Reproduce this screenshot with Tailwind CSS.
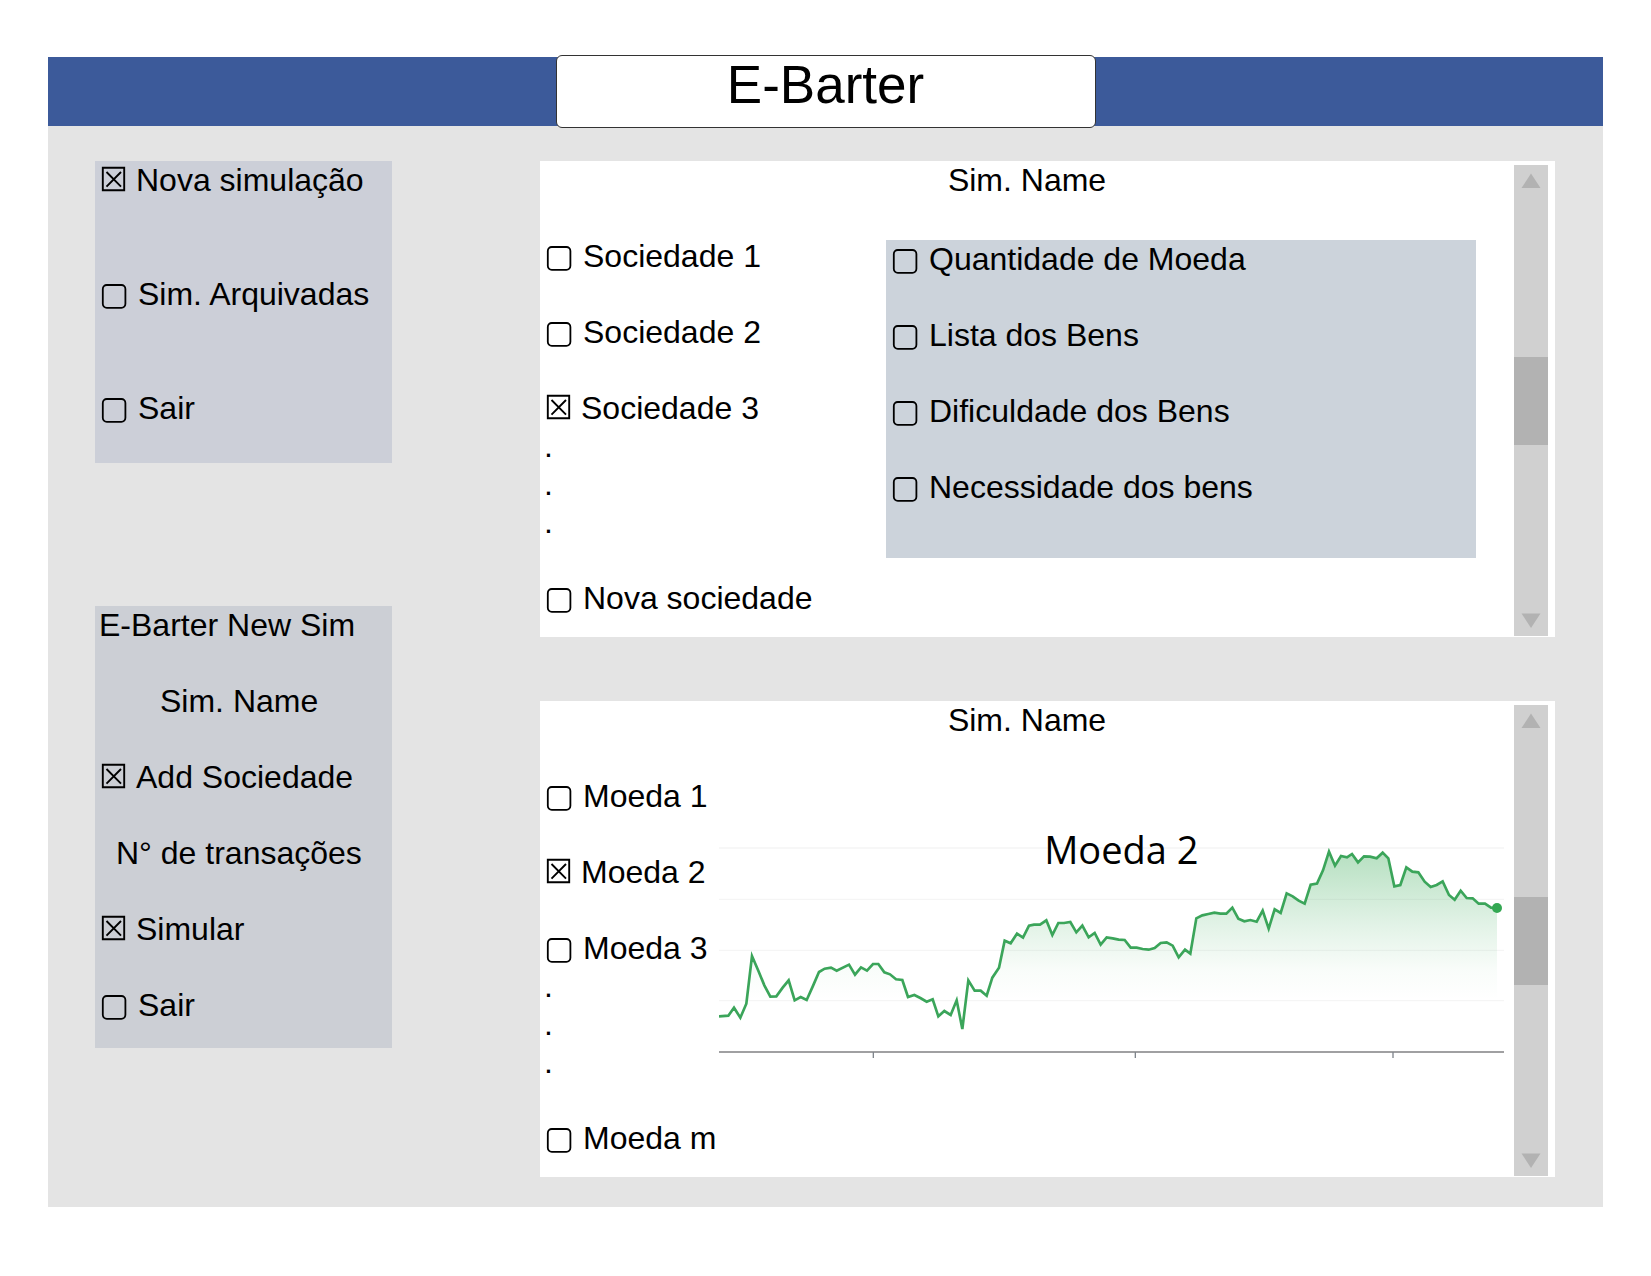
<!DOCTYPE html>
<html lang="pt">
<head>
<meta charset="utf-8">
<meta name="viewport" content="width=device-width, initial-scale=1">
<title>E-Barter</title>
<script src="https://cdn.jsdelivr.net/npm/@tailwindcss/browser@4"></script>
</head>
<body class="bg-white px-12 pt-[57px] pb-[69px] font-['Liberation_Sans',Arial,sans-serif] text-[32px] leading-[38px] text-black">

<svg class="hidden" aria-hidden="true">
  <symbol id="box" viewBox="0 0 30 38"><rect x="4.8" y="10" width="22.6" height="22.8" rx="4" fill="none" stroke="#000" stroke-width="1.8"/></symbol>
  <symbol id="box-x" viewBox="0 0 30 38"><path d="M4.8 6.8H26.2V29.2H4.8ZM8.5 11 23 25.6M23 11 8.5 25.6" fill="none" stroke="#000" stroke-width="1.9"/></symbol>
</svg>

<div class="bg-[#e4e4e4]">
  <header class="flex h-[69px] items-center justify-center bg-[#3c5a9a]">
    <h1 class="h-[73px] w-[540px] shrink-0 rounded-md border border-[#333] bg-white text-center text-[53px] leading-[57px]">E-Barter</h1>
  </header>

  <main class="flex gap-[148px] pt-[35px] pr-12 pb-[30px] pl-[47px]">
    <div class="flex w-[297px] shrink-0 flex-col gap-[143px]">
      <nav class="flex flex-col gap-[76px] bg-[#cccfd8] pb-9 pl-[3px]">
        <label class="flex"><span class="relative h-[38px] w-10 has-checked:w-[38px]"><input type="checkbox" checked class="peer absolute inset-0 size-full appearance-none"><svg class="pointer-events-none absolute h-[38px] w-[30px] peer-checked:hidden"><use href="#box"/></svg><svg class="pointer-events-none absolute hidden h-[38px] w-[30px] peer-checked:block"><use href="#box-x"/></svg></span>Nova simulação</label>
        <label class="flex"><span class="relative h-[38px] w-10 has-checked:w-[38px]"><input type="checkbox" class="peer absolute inset-0 size-full appearance-none"><svg class="pointer-events-none absolute h-[38px] w-[30px] peer-checked:hidden"><use href="#box"/></svg><svg class="pointer-events-none absolute hidden h-[38px] w-[30px] peer-checked:block"><use href="#box-x"/></svg></span>Sim. Arquivadas</label>
        <label class="flex"><span class="relative h-[38px] w-10 has-checked:w-[38px]"><input type="checkbox" class="peer absolute inset-0 size-full appearance-none"><svg class="pointer-events-none absolute h-[38px] w-[30px] peer-checked:hidden"><use href="#box"/></svg><svg class="pointer-events-none absolute hidden h-[38px] w-[30px] peer-checked:block"><use href="#box-x"/></svg></span>Sair</label>
      </nav>

      <section class="flex min-h-[442px] flex-col justify-between bg-[#cccfd5] pb-6 pl-[3px]">
        <h2 class="pl-px">E-Barter New Sim</h2>
        <p class="pl-[62px]">Sim. Name</p>
        <label class="flex"><span class="relative h-[38px] w-10 has-checked:w-[38px]"><input type="checkbox" checked class="peer absolute inset-0 size-full appearance-none"><svg class="pointer-events-none absolute h-[38px] w-[30px] peer-checked:hidden"><use href="#box"/></svg><svg class="pointer-events-none absolute hidden h-[38px] w-[30px] peer-checked:block"><use href="#box-x"/></svg></span>Add Sociedade</label>
        <p class="pl-[18px]">N° de transações</p>
        <label class="flex"><span class="relative h-[38px] w-10 has-checked:w-[38px]"><input type="checkbox" checked class="peer absolute inset-0 size-full appearance-none"><svg class="pointer-events-none absolute h-[38px] w-[30px] peer-checked:hidden"><use href="#box"/></svg><svg class="pointer-events-none absolute hidden h-[38px] w-[30px] peer-checked:block"><use href="#box-x"/></svg></span>Simular</label>
        <label class="flex"><span class="relative h-[38px] w-10 has-checked:w-[38px]"><input type="checkbox" class="peer absolute inset-0 size-full appearance-none"><svg class="pointer-events-none absolute h-[38px] w-[30px] peer-checked:hidden"><use href="#box"/></svg><svg class="pointer-events-none absolute hidden h-[38px] w-[30px] peer-checked:block"><use href="#box-x"/></svg></span>Sair</label>
      </section>
    </div>

    <div class="flex min-w-0 flex-1 flex-col gap-16">
      <section class="flex min-h-[476px] bg-white">
        <div class="flex min-w-0 flex-1 flex-col gap-[38px]">
          <h2 class="text-center">Sim. Name</h2>
          <div class="flex items-start">
            <div class="flex w-[346px] shrink-0 flex-col gap-[38px] pl-[3px]">
              <label class="flex"><span class="relative h-[38px] w-10 has-checked:w-[38px]"><input type="checkbox" class="peer absolute inset-0 size-full appearance-none"><svg class="pointer-events-none absolute h-[38px] w-[30px] peer-checked:hidden"><use href="#box"/></svg><svg class="pointer-events-none absolute hidden h-[38px] w-[30px] peer-checked:block"><use href="#box-x"/></svg></span>Sociedade 1</label>
              <label class="flex"><span class="relative h-[38px] w-10 has-checked:w-[38px]"><input type="checkbox" class="peer absolute inset-0 size-full appearance-none"><svg class="pointer-events-none absolute h-[38px] w-[30px] peer-checked:hidden"><use href="#box"/></svg><svg class="pointer-events-none absolute hidden h-[38px] w-[30px] peer-checked:block"><use href="#box-x"/></svg></span>Sociedade 2</label>
              <div>
                <label class="flex"><span class="relative h-[38px] w-10 has-checked:w-[38px]"><input type="checkbox" checked class="peer absolute inset-0 size-full appearance-none"><svg class="pointer-events-none absolute h-[38px] w-[30px] peer-checked:hidden"><use href="#box"/></svg><svg class="pointer-events-none absolute hidden h-[38px] w-[30px] peer-checked:block"><use href="#box-x"/></svg></span>Sociedade 3</label>
                <p class="pl-px">.<br>.<br>.</p>
              </div>
              <label class="flex"><span class="relative h-[38px] w-10 has-checked:w-[38px]"><input type="checkbox" class="peer absolute inset-0 size-full appearance-none"><svg class="pointer-events-none absolute h-[38px] w-[30px] peer-checked:hidden"><use href="#box"/></svg><svg class="pointer-events-none absolute hidden h-[38px] w-[30px] peer-checked:block"><use href="#box-x"/></svg></span>Nova sociedade</label>
            </div>
            <div class="mt-[3px] mr-[38px] flex flex-1 flex-col gap-[38px] bg-[#ccd3db] pb-[52px] pl-[3px]">
              <label class="flex"><span class="relative h-[38px] w-10 has-checked:w-[38px]"><input type="checkbox" class="peer absolute inset-0 size-full appearance-none"><svg class="pointer-events-none absolute h-[38px] w-[30px] peer-checked:hidden"><use href="#box"/></svg><svg class="pointer-events-none absolute hidden h-[38px] w-[30px] peer-checked:block"><use href="#box-x"/></svg></span>Quantidade de Moeda</label>
              <label class="flex"><span class="relative h-[38px] w-10 has-checked:w-[38px]"><input type="checkbox" class="peer absolute inset-0 size-full appearance-none"><svg class="pointer-events-none absolute h-[38px] w-[30px] peer-checked:hidden"><use href="#box"/></svg><svg class="pointer-events-none absolute hidden h-[38px] w-[30px] peer-checked:block"><use href="#box-x"/></svg></span>Lista dos Bens</label>
              <label class="flex"><span class="relative h-[38px] w-10 has-checked:w-[38px]"><input type="checkbox" class="peer absolute inset-0 size-full appearance-none"><svg class="pointer-events-none absolute h-[38px] w-[30px] peer-checked:hidden"><use href="#box"/></svg><svg class="pointer-events-none absolute hidden h-[38px] w-[30px] peer-checked:block"><use href="#box-x"/></svg></span>Dificuldade dos Bens</label>
              <label class="flex"><span class="relative h-[38px] w-10 has-checked:w-[38px]"><input type="checkbox" class="peer absolute inset-0 size-full appearance-none"><svg class="pointer-events-none absolute h-[38px] w-[30px] peer-checked:hidden"><use href="#box"/></svg><svg class="pointer-events-none absolute hidden h-[38px] w-[30px] peer-checked:block"><use href="#box-x"/></svg></span>Necessidade dos bens</label>
            </div>
          </div>
        </div>
        <div class="mt-1 mr-[7px] mb-px flex w-[34px] shrink-0 flex-col bg-[#d0d0d0]">
          <button type="button" aria-label="Subir" class="h-[30px]"><svg class="h-[30px] w-[34px]" viewBox="0 0 34 30"><path d="M17 8.5 26.5 23H7.5Z" fill="#b2b2b2"/></svg></button>
          <div class="flex-1 pt-[162px]"><div class="h-[88px] bg-[#b2b2b2]"></div></div>
          <button type="button" aria-label="Descer" class="h-[30px]"><svg class="h-[30px] w-[34px]" viewBox="0 0 34 30"><path d="M17 22 26.5 7.500H7.500Z" fill="#b2b2b2"/></svg></button>
        </div>
      </section>

      <section class="flex min-h-[476px] bg-white">
        <div class="flex min-w-0 flex-1 flex-col gap-[38px]">
          <h2 class="text-center">Sim. Name</h2>
          <div class="flex items-start">
            <div class="flex w-[179px] shrink-0 flex-col gap-[38px] pl-[3px]">
              <label class="flex"><span class="relative h-[38px] w-10 has-checked:w-[38px]"><input type="checkbox" class="peer absolute inset-0 size-full appearance-none"><svg class="pointer-events-none absolute h-[38px] w-[30px] peer-checked:hidden"><use href="#box"/></svg><svg class="pointer-events-none absolute hidden h-[38px] w-[30px] peer-checked:block"><use href="#box-x"/></svg></span>Moeda 1</label>
              <label class="flex"><span class="relative h-[38px] w-10 has-checked:w-[38px]"><input type="checkbox" checked class="peer absolute inset-0 size-full appearance-none"><svg class="pointer-events-none absolute h-[38px] w-[30px] peer-checked:hidden"><use href="#box"/></svg><svg class="pointer-events-none absolute hidden h-[38px] w-[30px] peer-checked:block"><use href="#box-x"/></svg></span>Moeda 2</label>
              <div>
                <label class="flex"><span class="relative h-[38px] w-10 has-checked:w-[38px]"><input type="checkbox" class="peer absolute inset-0 size-full appearance-none"><svg class="pointer-events-none absolute h-[38px] w-[30px] peer-checked:hidden"><use href="#box"/></svg><svg class="pointer-events-none absolute hidden h-[38px] w-[30px] peer-checked:block"><use href="#box-x"/></svg></span>Moeda 3</label>
                <p class="pl-px">.<br>.<br>.</p>
              </div>
              <label class="flex whitespace-nowrap"><span class="relative h-[38px] w-10 has-checked:w-[38px]"><input type="checkbox" class="peer absolute inset-0 size-full appearance-none"><svg class="pointer-events-none absolute h-[38px] w-[30px] peer-checked:hidden"><use href="#box"/></svg><svg class="pointer-events-none absolute hidden h-[38px] w-[30px] peer-checked:block"><use href="#box-x"/></svg></span>Moeda m</label>
            </div>
            <svg class="mt-[51px] mr-[10px] h-auto min-w-0 flex-1" viewBox="0 -36 2355 696" role="img" aria-label="Moeda 2">
              <defs>
                <linearGradient id="area" gradientUnits="userSpaceOnUse" x1="0" y1="35" x2="0" y2="480">
                  <stop offset="0" stop-color="#34a853" stop-opacity=".36"/>
                  <stop offset="0.5" stop-color="#34a853" stop-opacity=".14"/>
                  <stop offset="0.8" stop-color="#34a853" stop-opacity=".03"/>
                  <stop offset="1" stop-color="#34a853" stop-opacity="0"/>
                </linearGradient>
                <path id="line" d="M0 529 28 527 45 503 64 533 82 491 99 348 118 392 136 436 154 470 172 469 191 443 209 421 227 481 245 471 263 480 281 440 300 396 317 386 336 383 353 392 390 374 408 404 426 382 444 392 462 372 478 372 496 397 513 403 531 418 550 420 567 471 586 465 604 474 623 485 641 478 658 529 676 513 695 525 713 481 730 567 748 421 767 452 785 452 803 467 820 413 840 383 857 302 875 310 894 281 912 293 930 257 945 254 963 254 982 241 1000 285 1018 249 1035 249 1054 246 1072 277 1090 257 1109 292 1127 279 1145 314 1163 292 1181 295 1199 299 1217 300 1235 323 1253 323 1271 327 1289 329 1307 324 1325 309 1343 307 1361 317 1379 352 1398 329 1414 341 1432 235 1450 226 1468 222 1486 218 1504 221 1522 221 1540 203 1558 236 1576 244 1594 240 1613 245 1631 212 1649 266 1667 208 1685 219 1703 160 1721 169 1739 182 1757 191 1775 134 1794 131 1812 91 1830 35 1848 77 1866 48 1884 52 1899 42 1917 67 1935 49 1953 50 1973 55 1991 38 2008 55 2026 139 2044 135 2062 82 2080 95 2098 97 2117 125 2135 141 2153 135 2171 124 2190 165 2207 179 2225 152 2243 174 2261 175 2279 191 2298 191 2316 203 2334 204"/>
                <clipPath id="under"><path d="M0 529 28 527 45 503 64 533 82 491 99 348 118 392 136 436 154 470 172 469 191 443 209 421 227 481 245 471 263 480 281 440 300 396 317 386 336 383 353 392 390 374 408 404 426 382 444 392 462 372 478 372 496 397 513 403 531 418 550 420 567 471 586 465 604 474 623 485 641 478 658 529 676 513 695 525 713 481 730 567 748 421 767 452 785 452 803 467 820 413 840 383 857 302 875 310 894 281 912 293 930 257 945 254 963 254 982 241 1000 285 1018 249 1035 249 1054 246 1072 277 1090 257 1109 292 1127 279 1145 314 1163 292 1181 295 1199 299 1217 300 1235 323 1253 323 1271 327 1289 329 1307 324 1325 309 1343 307 1361 317 1379 352 1398 329 1414 341 1432 235 1450 226 1468 222 1486 218 1504 221 1522 221 1540 203 1558 236 1576 244 1594 240 1613 245 1631 212 1649 266 1667 208 1685 219 1703 160 1721 169 1739 182 1757 191 1775 134 1794 131 1812 91 1830 35 1848 77 1866 48 1884 52 1899 42 1917 67 1935 49 1953 50 1973 55 1991 38 2008 55 2026 139 2044 135 2062 82 2080 95 2098 97 2117 125 2135 141 2153 135 2171 124 2190 165 2207 179 2225 152 2243 174 2261 175 2279 191 2298 191 2316 203 2334 204V636H0Z"/></clipPath>
              </defs>
              <path d="M0 24H2355M0 178H2355M0 331H2355M0 482H2355" stroke="#f5f5f5" stroke-width="4"/>
              <rect width="2334" height="636" fill="url(#area)" clip-path="url(#under)"/>
              <path d="M0 636H2355" stroke="#a0a0a2" stroke-width="6"/>
              <path d="M463 636V654M1249 636V654M2022 636V654" stroke="#80858c" stroke-width="4"/>
              <use href="#line" fill="none" stroke="#3ba55a" stroke-width="8"/>
              <circle cx="2334" cy="204" r="15" fill="#34a853"/>
              <text x="1207" y="72" text-anchor="middle" class="font-['Open_Sans','Noto_Sans',sans-serif] text-[114px]">Moeda 2</text>
            </svg>
          </div>
        </div>
        <div class="mt-1 mr-[7px] mb-px flex w-[34px] shrink-0 flex-col bg-[#d0d0d0]">
          <button type="button" aria-label="Subir" class="h-[30px]"><svg class="h-[30px] w-[34px]" viewBox="0 0 34 30"><path d="M17 8.5 26.5 23H7.5Z" fill="#b2b2b2"/></svg></button>
          <div class="flex-1 pt-[162px]"><div class="h-[88px] bg-[#b2b2b2]"></div></div>
          <button type="button" aria-label="Descer" class="h-[30px]"><svg class="h-[30px] w-[34px]" viewBox="0 0 34 30"><path d="M17 22 26.5 7.500H7.500Z" fill="#b2b2b2"/></svg></button>
        </div>
      </section>
    </div>
  </main>
</div>
</body>
</html>
